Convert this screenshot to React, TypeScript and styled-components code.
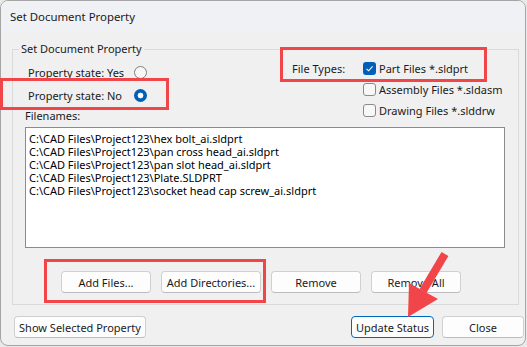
import React from 'react';
import styled, { createGlobalStyle } from 'styled-components';

const GlobalStyle = createGlobalStyle`
  html, body {
    margin: 0;
    padding: 0;
    background: #e9e9ea;
  }
  body {
    font-family: "Noto Sans", "Liberation Sans", sans-serif;
    font-size: 11px;
    color: #1b1b1b;
  }
`;

const Page = styled.div`
  position: relative;
  width: 527px;
  height: 347px;
`;

const Window = styled.div`
  box-sizing: border-box;
  width: 526px;
  height: 346px;
  display: flex;
  flex-direction: column;
  background: #f0f0f0;
  border: 1px solid #a5a5a5;
  border-radius: 8px;
  overflow: hidden;
`;

const TitleBar = styled.div`
  height: 30px;
  flex: none;
  display: flex;
  align-items: center;
  padding-left: 9px;
  background: #eff1f5;
  font-size: 11.4px;
  color: #1a1a1a;
`;

const Group = styled.fieldset`
  box-sizing: border-box;
  width: 507px;
  height: 264px;
  margin: 10px 0 0 11px;
  padding: 0 12px;
  border: 1px solid #dadada;
  border-radius: 0;
  min-width: 0;
`;

const Legend = styled.legend`
  margin-left: -6px;
  padding: 0 2px;
  line-height: 16px;
`;

const TopSection = styled.div`
  display: flex;
`;

const LeftCol = styled.div`
  width: 267px;
  padding-top: 4px;
  display: flex;
  flex-direction: column;
`;

const RightCol = styled.div`
  padding-top: 1px;
  display: flex;
  flex-direction: column;
`;

const RadioRow = styled.label`
  height: 23px;
  margin-left: 3px;
  display: flex;
  align-items: center;
`;

const RadioText = styled.span`
  width: 106px;
`;

const Radio = styled.input.attrs({ type: 'radio' })`
  appearance: none;
  margin: 0;
  width: 13px;
  height: 13px;
  box-sizing: border-box;
  border-radius: 50%;
  border: 1px solid #7e7e7e;
  background: #f7f7f7;
  &:checked {
    border: none;
    background: radial-gradient(circle, #ffffff 0 2.6px, #005fb8 3.2px);
  }
`;

const FieldLabel = styled.span`
  line-height: 16px;
  margin-top: 1px;
`;

const CheckRow = styled.label<{ $indent?: boolean }>`
  height: 21px;
  display: flex;
  align-items: center;
  margin-left: ${(p) => (p.$indent ? '71px' : '0')};
`;

const TypesLabel = styled.span`
  width: 71px;
`;

const CheckBox = styled.span<{ $on: boolean }>`
  box-sizing: border-box;
  width: 13px;
  height: 13px;
  margin-right: 3px;
  border-radius: 3px;
  display: flex;
  align-items: center;
  justify-content: center;
  border: ${(p) => (p.$on ? 'none' : '1px solid #8a8a8a')};
  background: ${(p) => (p.$on ? '#005fb8' : '#f7f7f7')};
`;

const ListBox = styled.div`
  box-sizing: border-box;
  width: 480px;
  height: 121px;
  margin-top: 3px;
  padding: 4px 3px 0;
  background: #ffffff;
  border: 1px solid #8b8b8b;
  color: #000;
  line-height: 13px;
`;

const ListItem = styled.div`
  height: 13px;
  white-space: nowrap;
`;

const ButtonRow = styled.div`
  display: flex;
  gap: 10px;
  margin-top: 23px;
  padding-left: 36px;
`;

const Button = styled.button<{ $w: number; $primary?: boolean }>`
  box-sizing: border-box;
  width: ${(p) => p.$w}px;
  height: 22px;
  padding: 0;
  font-family: inherit;
  font-size: 11px;
  color: #1b1b1b;
  background: #fdfdfd;
  border: 1px solid ${(p) => (p.$primary ? '#0067c0' : '#d0d0d0')};
  border-bottom-color: ${(p) => (p.$primary ? '#0067c0' : '#bcbcbc')};
  border-radius: 4px;
`;

const BottomRow = styled.div`
  display: flex;
  align-items: center;
  gap: 8px;
  margin-top: 11px;
  padding: 0 1px 0 13px;
`;

const Spacer = styled.div`
  flex: 1;
`;

const Highlight = styled.div<{ $x: number; $y: number; $w: number; $h: number }>`
  position: absolute;
  box-sizing: border-box;
  left: ${(p) => p.$x}px;
  top: ${(p) => p.$y}px;
  width: ${(p) => p.$w}px;
  height: ${(p) => p.$h}px;
  border: 3px solid #f2454a;
  pointer-events: none;
`;

const ArrowLayer = styled.svg`
  position: absolute;
  left: 0;
  top: 0;
  pointer-events: none;
`;

const files = [
  'C:\\CAD Files\\Project123\\hex bolt_ai.sldprt',
  'C:\\CAD Files\\Project123\\pan cross head_ai.sldprt',
  'C:\\CAD Files\\Project123\\pan slot head_ai.sldprt',
  'C:\\CAD Files\\Project123\\Plate.SLDPRT',
  'C:\\CAD Files\\Project123\\socket head cap screw_ai.sldprt',
];

const Check = ({ on }: { on: boolean }) => (
  <CheckBox $on={on}>
    {on && (
      <svg width="9" height="9" viewBox="0 0 9 9">
        <path d="M1.5 4.8 L3.6 6.8 L7.6 2.4" fill="none" stroke="#fff" strokeWidth="1.1" />
      </svg>
    )}
  </CheckBox>
);

const App = () => {
  const [state, setState] = React.useState('no');
  const [types, setTypes] = React.useState({ part: true, asm: false, drw: false });

  const toggle = (key: 'part' | 'asm' | 'drw') => setTypes({ ...types, [key]: !types[key] });

  return (
    <Page>
      <GlobalStyle />
      <Window>
        <TitleBar>Set Document Property</TitleBar>
        <Group>
          <Legend>Set Document Property</Legend>
          <TopSection>
            <LeftCol>
              <RadioRow>
                <RadioText>Property state: Yes</RadioText>
                <Radio name="state" checked={state === 'yes'} onChange={() => setState('yes')} />
              </RadioRow>
              <RadioRow>
                <RadioText>Property state: No</RadioText>
                <Radio name="state" checked={state === 'no'} onChange={() => setState('no')} />
              </RadioRow>
              <FieldLabel>Filenames:</FieldLabel>
            </LeftCol>
            <RightCol>
              <CheckRow onClick={() => toggle('part')}>
                <TypesLabel>File Types:</TypesLabel>
                <Check on={types.part} />
                Part Files *.sldprt
              </CheckRow>
              <CheckRow $indent onClick={() => toggle('asm')}>
                <Check on={types.asm} />
                Assembly Files *.sldasm
              </CheckRow>
              <CheckRow $indent onClick={() => toggle('drw')}>
                <Check on={types.drw} />
                Drawing Files *.slddrw
              </CheckRow>
            </RightCol>
          </TopSection>
          <ListBox>
            {files.map((f) => (
              <ListItem key={f}>{f}</ListItem>
            ))}
          </ListBox>
          <ButtonRow>
            <Button $w={90}>Add Files...</Button>
            <Button $w={100}>Add Directories...</Button>
            <Button $w={90}>Remove</Button>
            <Button $w={90}>Remove All</Button>
          </ButtonRow>
        </Group>
        <BottomRow>
          <Button $w={132}>Show Selected Property</Button>
          <Spacer />
          <Button $w={83} $primary>Update Status</Button>
          <Button $w={82}>Close</Button>
        </BottomRow>
      </Window>

      <Highlight $x={0} $y={78} $w={169} $h={32} />
      <Highlight $x={280} $y={47} $w={207} $h={35} />
      <Highlight $x={44} $y={259} $w={222} $h={44} />

      <ArrowLayer width={527} height={347} viewBox="0 0 527 347">
        <line x1="445" y1="254" x2="423" y2="291" stroke="#f2454a" strokeWidth="8" />
        <polygon points="409,283 438,299 408,317" fill="#f2454a" />
      </ArrowLayer>
    </Page>
  );
};

export default App;
